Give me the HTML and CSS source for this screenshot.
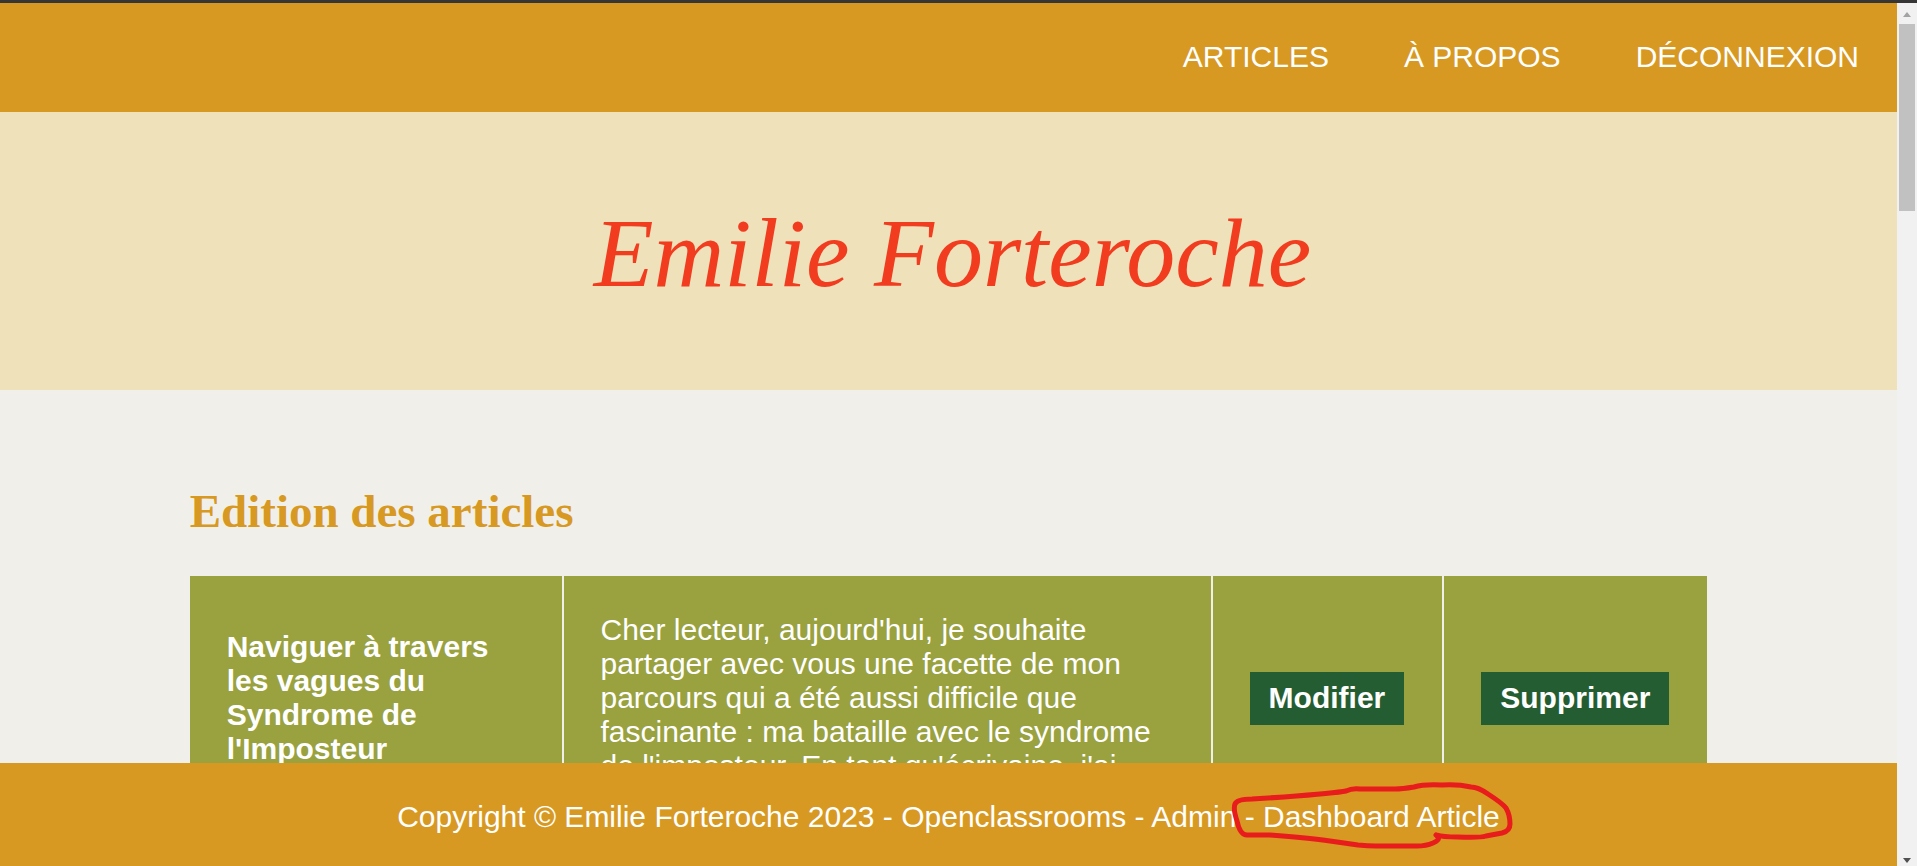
FILE: index.html
```html
<!DOCTYPE html>
<html lang="fr">
<head>
<meta charset="utf-8">
<title>Emilie Forteroche - Edition des articles</title>
<link rel="stylesheet" href="styles.css">
</head>
<body>
<div class="window">
  <div class="page">
    <nav class="nav">
      <a href="#articles">ARTICLES</a>
      <a href="#apropos">À PROPOS</a>
      <a href="#deconnexion">DÉCONNEXION</a>
    </nav>
    <header class="banner">
      <h1 class="logo">Emilie Forteroche</h1>
    </header>
    <main class="content">
      <h2 class="heading">Edition des articles</h2>
      <table class="articles">
        <tbody>
          <tr>
            <th scope="row" class="title">Naviguer à travers les vagues du Syndrome de l'Imposteur</th>
            <td>Cher lecteur, aujourd'hui, je souhaite partager avec vous une facette de mon parcours qui a été aussi difficile que fascinante : ma bataille avec le syndrome de l'imposteur. En tant qu'écrivaine, j'ai</td>
            <td class="action"><button type="button" class="btn">Modifier</button></td>
            <td class="action"><button type="button" class="btn">Supprimer</button></td>
          </tr>
        </tbody>
      </table>
    </main>
    <footer class="footer">
      <p>Copyright © Emilie Forteroche 2023 - Openclassrooms - Admin <span class="marked">- Dashboard Article<svg class="loop" viewBox="0 0 284 70" aria-hidden="true"><path d="M207 54 Q212 56 228 56 Q250 57 256 55 L272 52 Q280 50 280 43 Q280 34 276 27 Q272 22 258 13 Q248 6 241 6 Q228 3 212 4 Q194 3 184 6 Q172 8 165 8 H130 Q122 7 116 10 Q106 12 54 16 L22 18 Q7 18 5 23 Q3 28 7 40 Q10 54 17 54 H40 Q80 57 100 60 L128 64 Q138 65 146 65 H187 Q196 65 203 62 Q210 59 208 56 L206 54"/></svg></span></p>
    </footer>
  </div>
  <div class="scrollbar" aria-hidden="true">
    <svg class="arrow up" viewBox="0 0 8 5"><path d="M4 0 L8 5 H0 Z"/></svg>
    <div class="thumb"></div>
    <svg class="arrow down" viewBox="0 0 8 5"><path d="M0 0 H8 L4 5 Z"/></svg>
  </div>
</div>
</body>
</html>
```
FILE: styles.css
```css
* {
  box-sizing: border-box;
  margin: 0;
}

body {
  font-family: "Liberation Sans", Arial, sans-serif;
  font-size: 30px;
  line-height: 34px;
  color: #fff;
  background: #f1efea;
}

.window {
  display: flex;
  height: 100vh;
  border-top: 3px solid #363636;
  overflow: hidden;
}

.page {
  flex: 1;
  min-width: 0;
  display: flex;
  flex-direction: column;
}

.nav {
  display: flex;
  flex-shrink: 0;
  justify-content: flex-end;
  gap: 75px;
  padding: 37px 38px 38px;
  background: #d79922;
}

.nav a {
  color: inherit;
  text-decoration: none;
}

.banner {
  flex-shrink: 0;
  padding: 86px 0 82px 8px;
  text-align: center;
  background: #efe2ba;
}

.logo {
  font-family: "Liberation Serif", "Times New Roman", serif;
  font-size: 98px;
  font-style: italic;
  font-weight: 400;
  line-height: 110px;
  color: #f13c20;
}

.content {
  flex: 1;
  min-height: 0;
  padding: 94px 10% 0;
  overflow: hidden;
}

.heading {
  margin-bottom: 38px;
  font-family: "Liberation Serif", "Times New Roman", serif;
  font-size: 47px;
  line-height: 54px;
  color: #d79922;
}

.articles {
  width: 100%;
  border-collapse: separate;
  border-spacing: 0;
}

.articles th,
.articles td {
  padding: 37px;
  text-align: left;
  vertical-align: middle;
  background: #9aa13f;
}

.articles td {
  border-left: 2px solid #f1efea;
}

.articles .title {
  width: 24.5%;
}

.articles .action {
  width: 1%;
  padding: 37px 38px 37px 37px;
}

.btn {
  display: block;
  padding: 9px 19px 10px;
  border: 0;
  font: inherit;
  font-weight: 700;
  color: inherit;
  background: #255d33;
}

.footer {
  flex-shrink: 0;
  padding: 37px 0 32px;
  text-align: center;
  background: #d79922;
}

.marked {
  position: relative;
  white-space: nowrap;
}

.loop {
  position: absolute;
  left: -15px;
  top: -19px;
  width: 284px;
  height: 70px;
  fill: none;
  stroke: #e81c1c;
  stroke-width: 5;
  stroke-linecap: round;
  stroke-linejoin: round;
}

.scrollbar {
  display: flex;
  flex-direction: column;
  align-items: center;
  width: 20px;
  padding: 9px 0 3px;
  background: #f1f1f1;
}

.thumb {
  width: 16px;
  height: 187px;
  margin-top: 7px;
  background: #c1c1c1;
}

.arrow {
  width: 8px;
  height: 5px;
}

.up {
  fill: #a3a3a3;
}

.down {
  margin-top: auto;
  fill: #505050;
}
```
